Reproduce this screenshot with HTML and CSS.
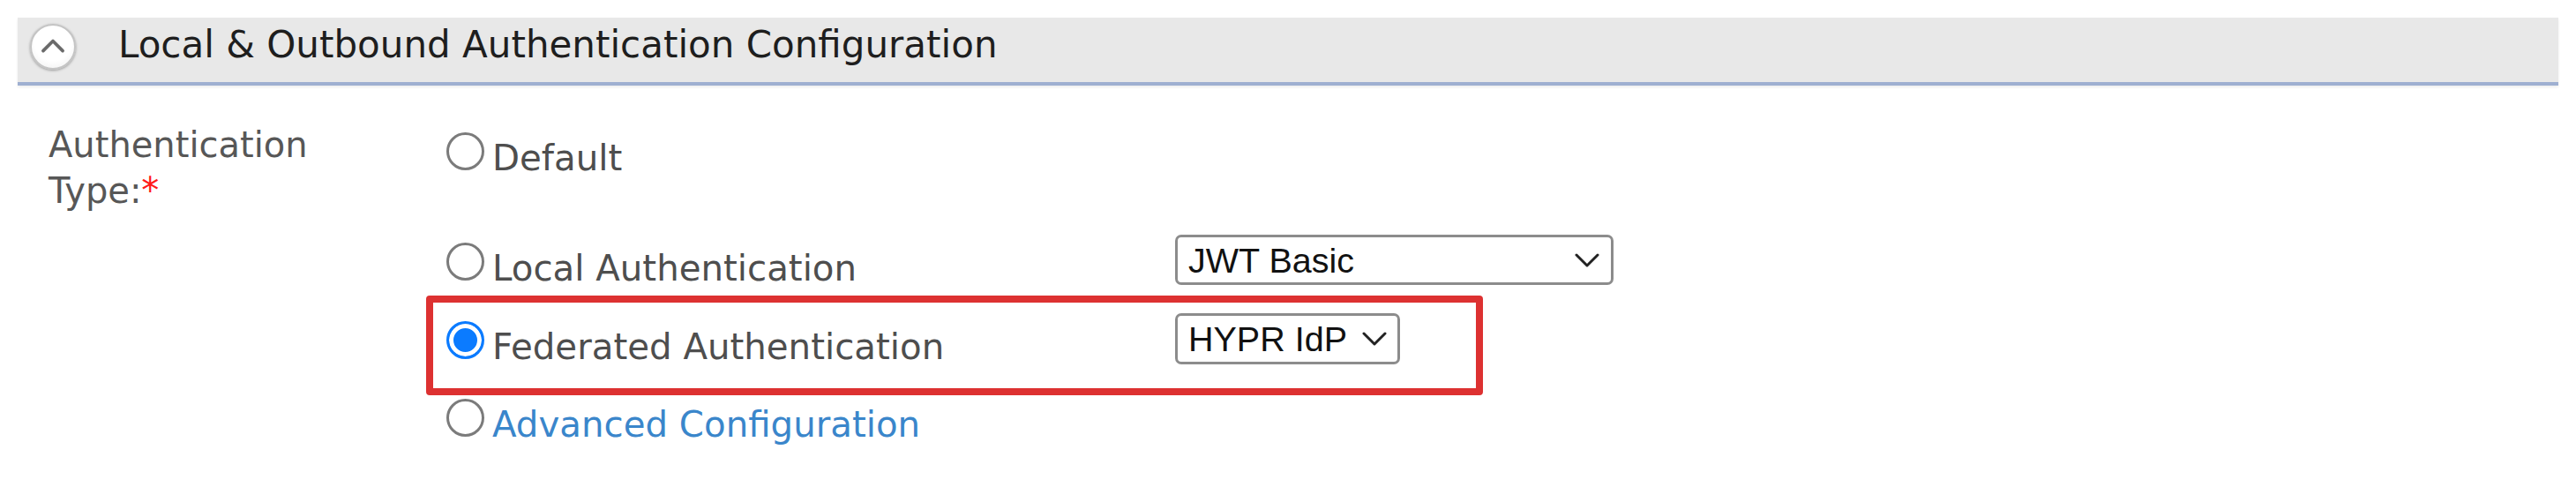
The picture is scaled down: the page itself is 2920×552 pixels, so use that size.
FILE: index.html
```html
<!DOCTYPE html>
<html lang="en">
<head>
<meta charset="utf-8">
<title>Local &amp; Outbound Authentication Configuration</title>
<link rel="stylesheet" href="styles.css">
</head>
<body>
<div class="page">
  <div class="section-header">
    <span class="toggle-icon">
      <svg width="52" height="52" viewBox="0 0 52 52" aria-hidden="true">
        <polyline points="14,31 26,19 38,31" fill="none" stroke="#6a6a6a" stroke-width="4" stroke-linecap="round" stroke-linejoin="round"/>
      </svg>
    </span>
    <h2 class="section-title">Local &amp; Outbound Authentication Configuration</h2>
  </div>

  <div class="form">
    <div class="field-label">Authentication Type:<span class="required">*</span></div>
    <div class="options">
      <label class="choice choice--first"><input type="radio" name="authType" class="radio"><span>Default</span></label>

      <div class="choice-row choice-row--local">
        <label class="choice choice--local"><input type="radio" name="authType" class="radio"><span>Local Authentication</span></label>
        <select class="select select--wide"><option>JWT Basic</option></select>
      </div>

      <div class="choice-row choice-row--federated">
        <label class="choice choice--federated"><input type="radio" name="authType" class="radio" checked><span>Federated Authentication</span></label>
        <select class="select select--narrow"><option>HYPR IdP</option></select>
        <span class="highlight"></span>
      </div>

      <label class="choice choice--advanced"><input type="radio" name="authType" class="radio"><a href="#" class="link">Advanced Configuration</a></label>
    </div>
  </div>
</div>
</body>
</html>
```

FILE: styles.css
```css
html, body {
  margin: 0;
  padding: 0;
  background: #ffffff;
}

body {
  font-family: "DejaVu Sans", "Noto Sans", sans-serif;
  color: #555555;
}

.page {
  padding: 20px 20px 0 20px;
}

/* Section header bar */
.section-header {
  display: flex;
  align-items: center;
  height: 73px;
  padding-left: 14px;
  background: #e8e8e8;
  border-bottom: 4px solid #9eafd1;
  box-shadow: 0 2px 3px rgba(0, 0, 0, 0.07);
}

.toggle-icon {
  width: 48px;
  height: 48px;
  margin-bottom: 8px;
  border-radius: 50%;
  border: 2px solid #c4c4c4;
  background: radial-gradient(circle at 50% 40%, #ffffff 0%, #ffffff 55%, #ededed 100%);
  box-shadow: 0 1px 3px rgba(0, 0, 0, 0.35);
  display: flex;
  align-items: center;
  justify-content: center;
  flex: none;
}

.toggle-icon svg {
  width: 48px;
  height: 48px;
}

.section-title {
  margin: 0 0 12px 48px;
  font-size: 42px;
  font-weight: normal;
  line-height: 49px;
  color: #1e1e1e;
}

/* Form */
.form {
  display: grid;
  grid-template-columns: 451px 1fr;
  margin: 41px 0 0 35px;
}

.field-label {
  width: 340px;
  font-size: 40px;
  line-height: 52px;
  color: #575757;
}

.required {
  color: #ff1a1a;
}

.options {
  padding-top: 12px;
}

.choice {
  display: block;
  font-size: 40.3px;
  line-height: 46px;
  color: #4e4e4e;
  white-space: nowrap;
}

.radio {
  -webkit-appearance: none;
  appearance: none;
  display: inline-block;
  vertical-align: baseline;
  box-sizing: border-box;
  width: 43px;
  height: 43px;
  margin: 0 9px 0 0;
  border: 3px solid #7b7b7b;
  border-radius: 50%;
  background: #ffffff;
}

.radio:checked {
  border-color: #0b7bff;
  background: #0b7bff;
  box-shadow: inset 0 0 0 5px #ffffff;
}

.choice-row {
  display: flex;
  align-items: flex-start;
}

.choice-row--local {
  margin-top: 63px;
}

.choice-row--federated {
  position: relative;
  margin-top: 27px;
}

.choice-row .choice {
  width: 826px;
  flex: none;
}

.choice--local {
  margin-top: 9px;
}

.choice--federated {
  margin-top: 9px;
}

.choice--advanced {
  margin-top: 35px;
}

.link {
  color: #3a86cb;
  text-decoration: none;
}

.select {
  -webkit-appearance: none;
  appearance: none;
  box-sizing: border-box;
  height: 57px;
  margin: 0;
  padding: 0 0 0 12px;
  border: 3px solid #8c8c8c;
  border-radius: 7px;
  font-family: "Liberation Sans", Arial, sans-serif;
  font-size: 39.5px;
  color: #111111;
  background-color: #ffffff;
  background-image: url("data:image/svg+xml;utf8,<svg xmlns='http://www.w3.org/2000/svg' width='28' height='16' viewBox='0 0 28 16'><polyline points='2,2 14,14 26,2' fill='none' stroke='%23222' stroke-width='3' stroke-linecap='round' stroke-linejoin='round'/></svg>");
  background-repeat: no-repeat;
  background-size: 28px 16px;
}

.select--wide {
  width: 497px;
  background-position: right 13px center;
}

.select--narrow {
  width: 255px;
  height: 58px;
  background-position: right 12px center;
}

/* Annotation box drawn over the federated row */
.highlight {
  position: absolute;
  left: -23px;
  top: -20px;
  width: 1198px;
  height: 113px;
  box-sizing: border-box;
  border: 8px solid #dd3131;
  border-radius: 4px;
  pointer-events: none;
}
```
